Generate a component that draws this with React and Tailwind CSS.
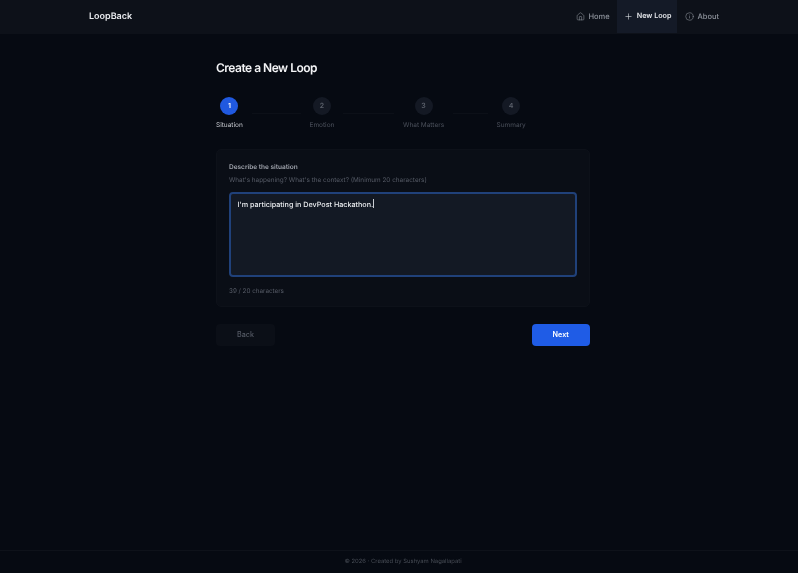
import { Home, Plus, Info } from "lucide-react";

const steps = [
  { n: 1, label: "Situation", active: true },
  { n: 2, label: "Emotion" },
  { n: 3, label: "What Matters" },
  { n: 4, label: "Summary" },
];

const NavItem = ({ icon: Icon, label, active }) => (
  <a
    className={`flex h-[33px] items-center gap-[3.5px] pl-[7.5px] ${
      active ? "bg-[#141a27] pr-[6px] text-[7.2px] font-semibold text-[#e5e7eb]" : "pr-[7px] text-[7.5px] font-medium text-[#8d929b]"
    }`}
  >
    <Icon size={9} strokeWidth={1.5} />
    {label}
  </a>
);

const App = () => {
  return (
    <div className="flex min-h-screen flex-col bg-[#060a12] font-['Inter',sans-serif] blur-[0.3px] [text-rendering:geometricPrecision]">
      <header className="flex h-[34px] items-center justify-between bg-[#0d1119] pl-[89px] pr-[72px]">
        <span className="text-[9px] font-semibold text-[#e8eaee]">LoopBack</span>
        <nav className="flex items-center self-start">
          <NavItem icon={Home} label="Home" />
          <NavItem icon={Plus} label="New Loop" active />
          <NavItem icon={Info} label="About" />
        </nav>
      </header>

      <main className="ml-[216px] w-[374px] flex-1 pt-[26px]">
        <h1 className="text-[12px] leading-[16px] font-semibold tracking-[-0.5px] text-[#f3f4f6]">Create a New Loop</h1>

        <div className="mt-[21px] flex items-start">
          {steps.map((s, i) => (
            <div key={s.n} className={`flex items-start ${i < 3 ? "w-[93.5px]" : ""}`}>
              <div className="flex flex-col items-center gap-[6px]">
                <div
                  className={`flex h-[18px] w-[18px] items-center justify-center rounded-full text-[7px] font-semibold ${
                    s.active ? "bg-[#2059e0] text-white" : "bg-[#141924] text-[#5b606b]"
                  }`}
                >
                  {s.n}
                </div>
                <span className={`text-[6.5px] leading-[8px] whitespace-nowrap ${s.active ? "text-[#c2c5cb]" : "text-[#4b505b]"}`}>
                  {s.label}
                </span>
              </div>
              {i < 3 && <div className="mx-[9px] mt-[16px] h-px flex-1 bg-[#0c1018]" />}
            </div>
          ))}
        </div>

        <section className="mt-[20px] rounded-[5px] border border-[#0d1119] bg-[#0a0e16] px-[12px] pt-[13px] pb-[10px]">
          <h2 className="text-[6.5px] leading-[9px] font-semibold text-[#a0a4ad]">Describe the situation</h2>
          <p className="mt-[4px] text-[6.4px] leading-[9px] text-[#565b66]">
            What's happening? What's the context? (Minimum 20 characters)
          </p>
          <div className="mt-[7px] h-[85px] rounded-[4px] border-2 border-[#20417a] bg-[#131924] px-[6.5px] py-[4px] text-[7.2px] leading-[12px] font-medium text-[#eceef1]">
            I'm participating in DevPost Hackathon.
            <span className="inline-block h-[9px] w-px translate-y-[1px] bg-[#c9ccd2]" />
          </div>
          <p className="mt-[10px] text-[6.3px] leading-[9px] text-[#565b66]">39 / 20 characters</p>
        </section>

        <div className="mt-[17px] flex items-center justify-between">
          <button className="h-[22px] w-[59px] rounded-[4px] bg-[#0b0f17] pt-px text-[7.2px] font-medium text-[#565b66]">Back</button>
          <button className="h-[22px] w-[58.5px] rounded-[4px] bg-[#1f5ce6] pt-px text-[7.2px] font-semibold text-white">Next</button>
        </div>
      </main>

      <footer className="flex h-[23px] items-center justify-center border-t border-[#0e121a] pl-[8px] text-[5.9px] text-[#474c55]">
        © 2026 · Created by Sushyam Nagallapati
      </footer>
    </div>
  );
};

export default App;
